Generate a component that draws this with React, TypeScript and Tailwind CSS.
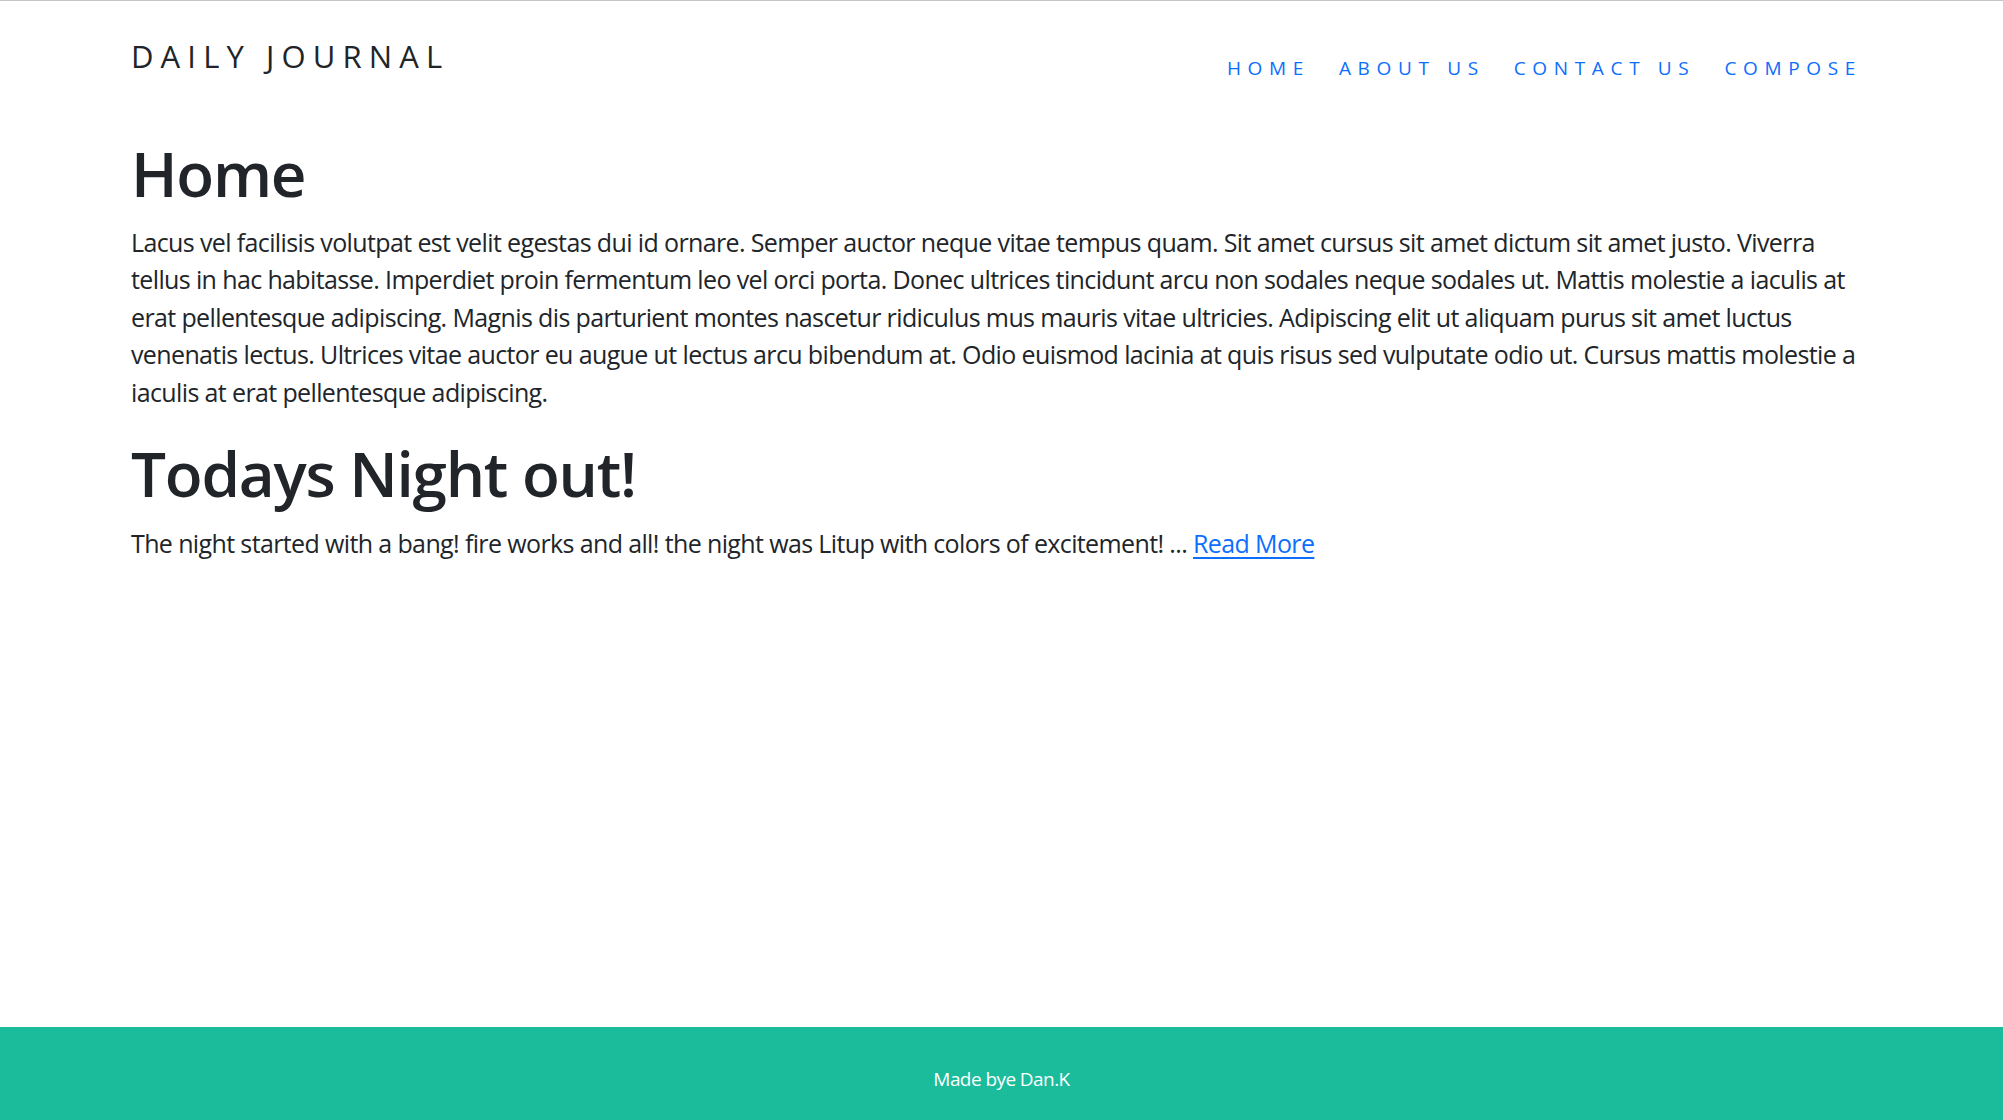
const navLinks = ['Home', 'About Us', 'Contact Us', 'Compose'];

const posts = [
  {
    title: 'Todays Night out!',
    excerpt:
      'The night started with a bang! fire works and all! the night was Litup with colors of excitement! ...',
  },
];

export default function App() {
  return (
    <div className="min-h-screen flex flex-col border-t border-[#c4c4c4] bg-white text-[#212529] font-['Open_Sans','Noto_Sans',sans-serif]">
      {/* Navbar */}
      <header className="flex items-start justify-between px-[131px] pt-[32px]">
        <a href="#" className="text-[31px] leading-[1.5] uppercase tracking-[0.23em] text-[#212529]">
          Daily Journal
        </a>
        <nav className="mt-[21px] mr-[10px] flex gap-[29px]">
          {navLinks.map((link) => (
            <a
              key={link}
              href="#"
              className="text-[19px] leading-[1.5] uppercase tracking-[0.35em] text-[#0d6efd]"
            >
              {link}
            </a>
          ))}
        </nav>
      </header>

      {/* Content */}
      <main className="flex-1 px-[131px]">
        <h1 className="mt-[53px] mb-[14px] text-[62px] leading-[1.2] font-semibold tracking-[-0.02em]">Home</h1>
        <p className="text-[25px] leading-[1.5] tracking-[-0.025em]">
          Lacus vel facilisis volutpat est velit egestas dui id ornare. Semper auctor neque vitae tempus quam. Sit amet
          cursus sit amet dictum sit amet justo. Viverra tellus in hac habitasse. Imperdiet proin fermentum leo vel orci
          porta. Donec ultrices tincidunt arcu non sodales neque sodales ut. Mattis molestie a iaculis at erat
          pellentesque adipiscing. Magnis dis parturient montes nascetur ridiculus mus mauris vitae ultricies.
          Adipiscing elit ut aliquam purus sit amet luctus venenatis lectus. Ultrices vitae auctor eu augue ut lectus
          arcu bibendum at. Odio euismod lacinia at quis risus sed vulputate odio ut. Cursus mattis molestie a iaculis
          at erat pellentesque adipiscing.
        </p>

        {posts.map((post) => (
          <div key={post.title} className="mt-[25px]">
            <h1 className="mb-[14px] text-[62px] leading-[1.2] font-semibold tracking-[-0.02em]">{post.title}</h1>
            <p className="text-[25px] leading-[1.5] tracking-[-0.025em]">
              {post.excerpt}{' '}
              <a href="#" className="text-[#0d6efd] underline underline-offset-[4px]">
                Read More
              </a>
            </p>
          </div>
        ))}
      </main>

      {/* Footer */}
      <footer className="h-[93px] bg-[#1abc9c] flex items-center justify-center pt-[12px]">
        <p className="text-[19px] tracking-[-0.03em] text-white">Made bye Dan.K</p>
      </footer>
    </div>
  );
}
